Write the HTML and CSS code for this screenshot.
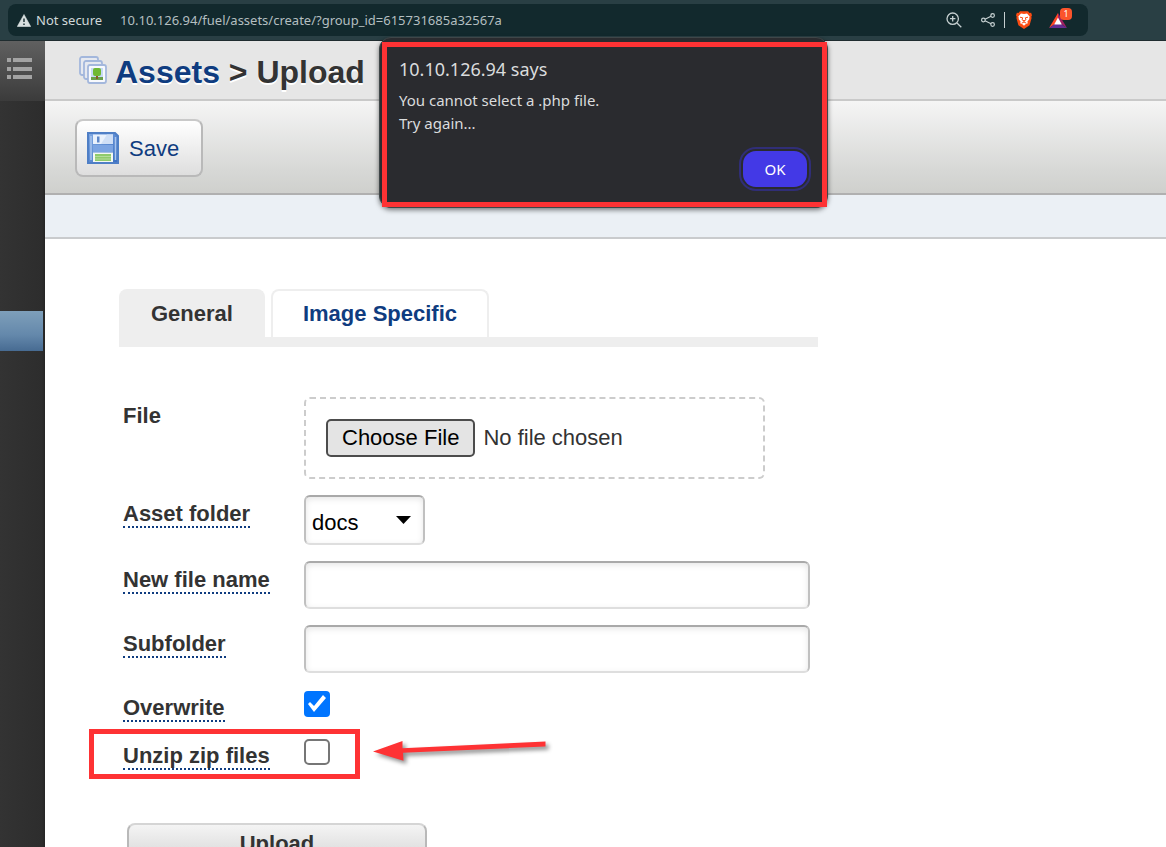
FILE: index.html
```html
<!DOCTYPE html>
<html lang="en">
<head>
<meta charset="utf-8">
<title>Assets &gt; Upload</title>
<link rel="stylesheet" href="styles.css">
</head>
<body>
<header class="browser">
  <div class="address">
    <svg class="warn" width="14" height="13" viewBox="0 0 14 13"><path d="M7 .5 13.7 12.500H.3Z" fill="#d9e0e0" stroke="#d9e0e0" stroke-width=".6" stroke-linejoin="round"/><path d="M7 4.500V8M7 9.500V11" stroke="#13292c" stroke-width="1.400"/></svg>
    <span class="secure">Not secure</span>
    <input class="url" type="text" aria-label="Address" value="10.10.126.94/fuel/assets/create/?group_id=615731685a32567a">
    <div class="tools">
      <button type="button" aria-label="Zoom"><svg width="16" height="16" viewBox="0 0 16 16" fill="none" stroke="#c5cfd0" stroke-width="1.300"><circle cx="6.700" cy="6.700" r="5.700"/><path d="M11 11l4.300 4.300M6.700 4v5.400M4 6.700h5.400"/></svg></button>
      <button type="button" aria-label="Share"><svg width="14" height="14" viewBox="0 0 14 14" fill="none" stroke="#c5cfd0" stroke-width="1.200"><circle cx="2.400" cy="7" r="1.800"/><circle cx="11.600" cy="2.500" r="1.800"/><circle cx="11.600" cy="11.500" r="1.800"/><path d="M4 6.200 10 3.300M4 7.800l6 2.900"/></svg></button>
      <span class="divider"></span>
      <button type="button" aria-label="Shields"><svg width="16" height="18" viewBox="0 0 16 18"><path d="M4 .3h8l1.600 1.600 1.500-.2.9 2.600-.7 1.400.3 1.200-2 7.300L8 18l-5.600-3.800-2-7.300.3-1.200L0 4.300l.9-2.600 1.500.2Z" fill="#fb4c12"/><path d="M5 2.500 8 3l3-.5 2.700 3.100-.5 1.300.2 1-2 2.600.4 1.700-2.200 1L8 14.800 6.400 13.200l-2.200-1 .4-1.700-2-2.600.2-1-.5-1.300Z" fill="#fff"/><path d="M4 6.200l2.700.6-.7 2 2 1 2-1-.7-2 2.700-.6M8 9.600v1.600M5.700 12.200 8 11l2.300 1.200" fill="none" stroke="#fb4c12" stroke-width="1"/></svg></button>
      <button type="button" class="rewards" aria-label="Rewards"><svg width="18" height="15" viewBox="0 0 18 15"><path d="M9 0 0 15 9 9Z" fill="#ff4724"/><path d="M9 0l9 15-9-6Z" fill="#9e1f63"/><path d="M0 15h18l-9-6Z" fill="#662d91"/><path d="M9 4.500 12.800 11.500H5.200Z" fill="#fff"/></svg><span class="badge">1</span></button>
    </div>
  </div>
</header>

<div class="app">
  <nav class="sidebar" aria-label="Main">
    <button type="button" class="menu" aria-label="Menu">
      <svg width="26" height="22" viewBox="0 0 26 22" fill="#a3a3a3"><path d="M0 0h4v4H0zM6 0h19v4H6zM0 9h4v4H0zM6 9h19v4H6zM0 17h4v4H0zM6 17h19v4H6z"/></svg>
    </button>
    <a class="current" href="#" aria-label="Assets"></a>
  </nav>

  <main class="main">
    <div class="heading">
      <svg width="28" height="30" viewBox="0 0 28 30" fill="#e6e9f0" stroke="#a3b7dc" stroke-width="1.800"><rect x="1" y="2" width="18" height="18" rx="2"/><rect x="5" y="6" width="18" height="18" rx="2"/><rect x="9" y="10" width="18" height="18" rx="2" fill="#f7f9fd"/><path d="M12 13h12v12H12z" fill="#c6daf5" stroke="none"/><path d="M12 22h12v3H12z" fill="#6aa04c" stroke="none"/><path d="M17 19h2v5h-2z" fill="#8a5a2a" stroke="none"/><rect x="14" y="13" width="8" height="8" rx="2" fill="#6fb933" stroke="none"/></svg>
      <h1><a href="#">Assets</a> &gt; Upload</h1>
    </div>

    <div class="toolbar">
      <button type="button" class="save">
        <svg width="32" height="34" viewBox="0 0 32 34"><defs><linearGradient id="disk" x2="1" y2="1"><stop stop-color="#7fa8e2"/><stop offset="1" stop-color="#3b6fc2"/></linearGradient></defs><path d="M1 2h27l3 3v27H1Z" fill="url(#disk)" stroke="#4f7fc6" stroke-width="2"/><path d="M4 5v24M28.500 6v23" stroke="#a9c5ee" stroke-width="1.500"/><path d="M6 3.500h20V13H6Z" fill="#e9f1fc"/><path d="M20 3.500h6V13H14Z" fill="#cfdff6"/><path d="M10 5.500h2.500v6H10Z" fill="#5d87c9"/><path d="M6 14h20v7H6Z" fill="#7ba4e2"/><path d="M6 21.500h20V31H6Z" fill="#f5f9f2"/><path d="M8 23h16v7H8Z" fill="#8fcb6c"/><path d="M8 25.500h16M8 28h16" stroke="#b5dc9b"/></svg>
        <span>Save</span>
      </button>
    </div>
    <div class="notice"></div>

    <div class="content">
      <div class="tabs" role="tablist">
        <button type="button" class="tab tab-active" role="tab" aria-selected="true">General</button>
        <button type="button" class="tab" role="tab" aria-selected="false">Image Specific</button>
      </div>

      <form class="form">
        <div class="row">
          <label for="file"><span>File</span></label>
          <div class="dropzone"><input id="file" type="file"></div>
        </div>
        <div class="row">
          <label for="folder"><span class="hint">Asset folder</span></label>
          <div class="select"><select id="folder"><option>docs</option></select></div>
        </div>
        <div class="row">
          <label for="name"><span class="hint">New file name</span></label>
          <input id="name" class="text" type="text">
        </div>
        <div class="row">
          <label for="sub"><span class="hint">Subfolder</span></label>
          <input id="sub" class="text" type="text">
        </div>
        <div class="row">
          <label for="overwrite"><span class="hint">Overwrite</span></label>
          <input id="overwrite" class="check" type="checkbox" checked>
        </div>
        <div class="row marked">
          <label for="unzip"><span class="hint">Unzip zip files</span></label>
          <input id="unzip" class="check" type="checkbox">
          <svg class="arrow" width="180" height="30" viewBox="0 0 180 30"><path d="M0 14.500 29.500 4v7.300L172.500 4.500v5L30 15.800l.5 8Z" fill="#fe3234"/></svg>
        </div>
        <button type="submit" class="upload">Upload</button>
      </form>
    </div>
  </main>
</div>

<div class="alert" role="alertdialog" aria-labelledby="alert-title">
  <h2 id="alert-title">10.10.126.94 says</h2>
  <p>You cannot select a .php file.<br>Try again...</p>
  <button type="button" class="ok">OK</button>
</div>
</body>
</html>
```
FILE: styles.css
```css
*,
*::before,
*::after {
  box-sizing: border-box;
}

body {
  margin: 0;
  height: 100vh;
  overflow: hidden;
  position: relative;
  display: flex;
  flex-direction: column;
  background: #fff;
  color: #333;
  font: 22px/25px "Liberation Sans", Arial, sans-serif;
}

button {
  margin: 0;
  padding: 0;
  border: 0;
  background: none;
  color: inherit;
  font: inherit;
}

a {
  color: #0f3c80;
  text-decoration: none;
}

svg {
  display: block;
  flex: none;
}

/* Browser chrome */
.browser {
  flex: none;
  padding: 4px 78px 4px 8px;
  background: #293f44;
  border-bottom: 1px solid #1f2c2f;
  font: 13px/20px "Noto Sans", sans-serif;
}

.address {
  display: flex;
  align-items: center;
  height: 32px;
  padding: 0 21px 0 9px;
  border-radius: 8px;
  background: #12292d;
  color: #d0d8d9;
}

.secure {
  margin: 0 18px 0 5px;
}

.url {
  flex: 1;
  min-width: 0;
  padding: 0;
  border: 0;
  background: none;
  color: #b4bfc0;
  font: inherit;
}

.tools {
  display: flex;
  align-items: center;
}

.tools button + button {
  margin-left: 19px;
}

.divider {
  width: 1px;
  height: 16px;
  margin: 0 11px 0 9px;
  background: #c5cfd0;
}

.tools .rewards {
  position: relative;
  margin-left: 17px;
}

.badge {
  position: absolute;
  top: -5px;
  right: -5px;
  width: 12px;
  border-radius: 4px;
  background: #fb542b;
  color: #fff;
  font-size: 9px;
  line-height: 12px;
}

/* App frame */
.app {
  flex: 1;
  min-height: 0;
  display: flex;
}

.sidebar {
  flex: none;
  width: 45px;
  background: linear-gradient(90deg, #333, #2d2d2d 42px, #252525);
}

.menu {
  display: flex;
  width: 100%;
  height: 60px;
  padding: 17px 7px;
  background: linear-gradient(#606060, #3b3b3b);
}

.current {
  display: block;
  width: 43px;
  height: 40px;
  margin-top: 210px;
  background: linear-gradient(#7e9fba, #6488ab 60%, #476b92);
}

.main {
  flex: 1;
  min-width: 0;
}

.heading {
  display: flex;
  align-items: center;
  gap: 8px;
  height: 60px;
  padding-left: 34px;
  background: #e6e6e6;
  border-bottom: 2px solid #c9c9c9;
}

h1 {
  margin: 0;
  padding-top: 4px;
  font-size: 32px;
  line-height: 36px;
  text-shadow: 0 2px 0 #fff;
}

.toolbar {
  height: 94px;
  padding: 18px 30px;
  background: linear-gradient(#f5f5f5, #d7d8d6 75%, #cfd0cd);
  border-bottom: 2px solid #b0b0b0;
}

.save {
  display: flex;
  align-items: center;
  gap: 10px;
  height: 58px;
  padding: 0 22px 0 10px;
  border: 2px solid #b9b9b9;
  border-top-color: #c9c9c9;
  border-radius: 8px;
  background: linear-gradient(#fff, #dedede);
  color: #0f3c80;
}

.notice {
  height: 44px;
  background: #ebf0f5;
  border-bottom: 2px solid #c9cbcd;
}

.content {
  max-width: 773px;
  padding: 50px 0 0 74px;
}

/* Tabs */
.tabs {
  display: flex;
  gap: 6px;
  border-bottom: 10px solid #eee;
}

.tab {
  height: 48px;
  padding: 0 30px 2px;
  border: 2px solid #eee;
  border-bottom: 0;
  border-radius: 8px 8px 0 0;
  color: #0f3c80;
  font-weight: bold;
}

.tab-active {
  background: #eee;
  color: #333;
}

/* Form */
.form {
  display: flex;
  flex-direction: column;
  gap: 16px;
  padding: 50px 8px 0 4px;
}

.row {
  display: flex;
  align-items: flex-start;
}

.row label {
  flex: none;
  width: 181px;
  padding-top: 6px;
  font-weight: bold;
}

.hint {
  border-bottom: 2px dotted #0f3c80;
}

.dropzone {
  width: 461px;
  padding: 20px;
  border: 2px dashed #ccc;
  border-radius: 6px;
}

.dropzone input {
  display: block;
  width: 100%;
  height: 38px;
  font: inherit;
}

.dropzone input::file-selector-button {
  height: 38px;
  margin: 0 8px 0 0;
  padding: 0 14px 2px;
  border: 2px solid #4c4c4c;
  border-radius: 5px;
  background: #e4e4e4;
  color: #000;
  font: inherit;
}

.select {
  position: relative;
}

.select::after {
  content: "";
  position: absolute;
  top: 21px;
  right: 14px;
  width: 15px;
  height: 8px;
  background: #000;
  clip-path: polygon(0 0, 100% 0, 50% 100%);
  pointer-events: none;
}

.select select,
.text {
  border: 2px solid #c0c0c0;
  border-top-color: #a9a9a9;
  border-bottom-color: #dedede;
  border-radius: 6px;
  background: #fff;
  box-shadow: inset 0 2px 6px rgba(0, 0, 0, 0.1);
  font: inherit;
}

.select select {
  display: block;
  appearance: none;
  width: 121px;
  height: 50px;
  padding: 4px 6px 0;
  color: #000;
}

.text {
  flex: 1;
  min-width: 0;
  height: 48px;
  padding: 0 8px;
}

.check {
  appearance: none;
  width: 26px;
  height: 26px;
  margin: 2px 0 4px;
  border: 2px solid #767676;
  border-radius: 5px;
  background: #fff;
}

.check:checked {
  border: 0;
  border-radius: 4px;
  background: #0075ff;
}

.check:checked::after {
  content: "";
  display: block;
  height: 26px;
  background: #fff;
  clip-path: polygon(4px 13px, 6px 11px, 10px 15px, 19px 4px, 22px 7px, 10px 21px);
}

.upload {
  width: 300px;
  height: 44px;
  margin: 38px 0 0 4px;
  padding-bottom: 3px;
  border: 2px solid #b9b9b9;
  border-top-color: #d5d5d5;
  border-radius: 8px;
  background: linear-gradient(#f4f4f4, #d4d4d4);
  font-weight: bold;
}

/* Annotations */
.marked {
  position: relative;
}

.marked::before,
.alert::before {
  content: "";
  position: absolute;
  border: 5px solid #fe3234;
  pointer-events: none;
}

.marked::before {
  top: -8px;
  left: -34px;
  width: 271px;
  height: 50px;
}

.arrow {
  position: absolute;
  top: 0;
  left: 250px;
  filter: drop-shadow(3px 3px 2px rgba(0, 0, 0, 0.45));
}

/* Alert */
.alert {
  position: absolute;
  top: 37px;
  left: 379px;
  width: 449px;
  padding: 19px 20px 20px 19px;
  border: 1px solid #3f4648;
  border-radius: 12px;
  background: #2a2b2f;
  box-shadow: 0 2px 5px rgba(0, 0, 0, 0.5);
  color: #dadcdd;
  font: 15px/23px "Noto Sans", sans-serif;
}

.alert::before {
  top: 4px;
  right: 0;
  bottom: 0;
  left: 2px;
}

.alert h2 {
  margin: 0 0 8px;
  font-size: 18px;
  font-weight: normal;
  line-height: 24px;
}

.alert p {
  margin: 0;
}

.ok {
  display: block;
  width: 64px;
  height: 36px;
  margin: 16px 0 0 auto;
  border-radius: 13px;
  background: #4339e6;
  outline: 2px solid #302e77;
  outline-offset: 2px;
  color: #fff;
}
```
